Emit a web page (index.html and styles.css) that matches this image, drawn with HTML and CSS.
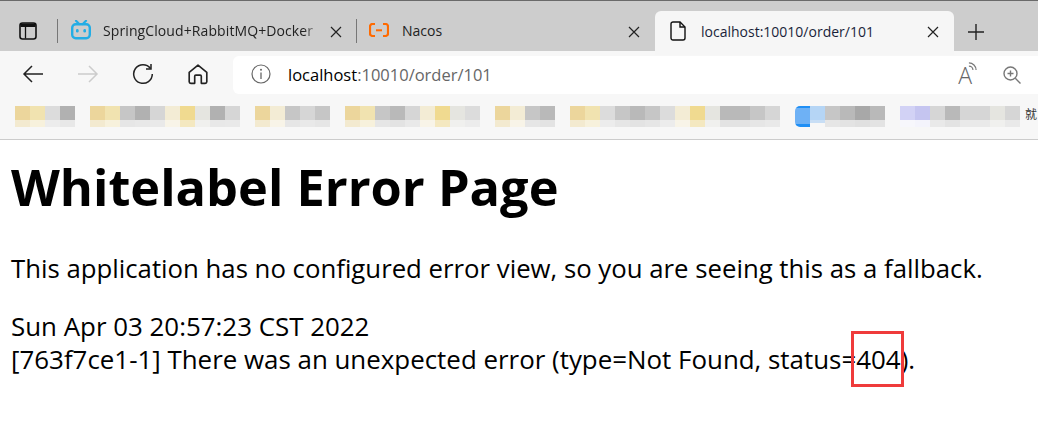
FILE: index.html
```html
<!DOCTYPE html>
<html lang="en">
<head>
<meta charset="utf-8">
<title>localhost:10010/order/101</title>
<link rel="stylesheet" href="styles.css">
</head>
<body>
<div class="browser">
  <div class="tabstrip">
    <svg class="ic tabs-ic" viewBox="0 0 18 18"><rect x="1" y="1" width="16" height="16" rx="2.500" fill="none" stroke="#111" stroke-width="1.600"/><path d="M1.500 1.500h15v3.500h-15z" fill="#111"/><path d="M6.500 5v11.500" stroke="#111" stroke-width="1.300"/></svg>
    <span class="sep"></span>
    <div class="tab tab-a">
      <svg class="fav" viewBox="0 0 20 20"><path d="M5 .8l3.200 3.200M15 .8l-3.200 3.200" stroke="#23ade5" stroke-width="2.200" stroke-linecap="round"/><rect x="1.200" y="4.200" width="17.600" height="14" rx="3.500" fill="none" stroke="#23ade5" stroke-width="2.400"/><rect x="5" y="9" width="2.600" height="3.600" rx="1.300" fill="#23ade5"/><rect x="12.400" y="9" width="2.600" height="3.600" rx="1.300" fill="#23ade5"/></svg>
      <span class="tab-title fade">SpringCloud+RabbitMQ+Docker</span>
      <svg class="close" viewBox="0 0 12 12"><path d="M1 1l10 10M11 1L1 11" stroke="#222" stroke-width="1.200"/></svg>
    </div>
    <span class="sep"></span>
    <div class="tab tab-b">
      <svg class="fav" viewBox="0 0 20 14"><path d="M6 1H3.500A2.500 2.500 0 0 0 1 3.500v7A2.500 2.500 0 0 0 3.500 13H6M14 1h2.500A2.500 2.500 0 0 1 19 3.500v7a2.500 2.500 0 0 1-2.500 2.500H14" fill="none" stroke="#ff6a00" stroke-width="2.200"/><path d="M7 7.300h6" stroke="#ff6a00" stroke-width="2"/></svg>
      <span class="tab-title">Nacos</span>
      <svg class="close" viewBox="0 0 12 12"><path d="M1 1l10 10M11 1L1 11" stroke="#222" stroke-width="1.200"/></svg>
    </div>
    <div class="tab tab-c">
      <svg class="fav doc" viewBox="0 0 16 20"><path d="M1 3a2 2 0 0 1 2-2h7l5 5v11a2 2 0 0 1-2 2H3a2 2 0 0 1-2-2z" fill="none" stroke="#111" stroke-width="1.400"/><path d="M10 1v5h5" fill="none" stroke="#111" stroke-width="1.400"/></svg>
      <span class="tab-title active">localhost:10010/order/101</span>
      <svg class="close" viewBox="0 0 12 12"><path d="M1 1l10 10M11 1L1 11" stroke="#222" stroke-width="1.200"/></svg>
    </div>
    <svg class="plus" viewBox="0 0 18 18"><path d="M9 1v16M1 9h16" stroke="#222" stroke-width="1.400"/></svg>
  </div>
  <div class="toolbar">
    <div class="nav">
      <svg class="nav-ic" viewBox="0 0 22 20"><path d="M21 10H2M10 2l-8 8 8 8" fill="none" stroke="#222" stroke-width="1.500"/></svg>
      <svg class="nav-ic" viewBox="0 0 22 20"><path d="M1 10h19M12 2l8 8-8 8" fill="none" stroke="#ccc" stroke-width="1.500"/></svg>
      <svg class="nav-ic" viewBox="0 0 22 22"><path d="M18.500 5.500A9.300 9.300 0 1 0 20.300 11" fill="none" stroke="#222" stroke-width="1.500"/><path d="M19 1v5h-5" fill="none" stroke="#222" stroke-width="1.500"/></svg>
      <svg class="nav-ic" viewBox="0 0 20 20"><path d="M2 8.500L10 2l8 6.500V17a1.500 1.500 0 0 1-1.500 1.500H13V12a1 1 0 0 0-1-1H8a1 1 0 0 0-1 1v6.500H3.500A1.500 1.500 0 0 1 2 17z" fill="none" stroke="#222" stroke-width="1.500" stroke-linejoin="round"/></svg>
    </div>
    <div class="omnibox">
      <svg class="info" viewBox="0 0 20 20"><circle cx="10" cy="10" r="9" fill="none" stroke="#666" stroke-width="1.200"/><path d="M10 8.500V15" stroke="#666" stroke-width="1.300"/><circle cx="10" cy="5.800" r="1" fill="#666"/></svg>
      <span class="url"><span class="host">localhost</span>:10010/order/101</span>
      <span class="omni-tools">
        <span class="read">A<svg class="waves" viewBox="0 0 10 10"><path d="M1 1a8 8 0 0 1 8 8M1 4.500a4.500 4.500 0 0 1 4.500 4.500" fill="none" stroke="#777" stroke-width="1.300"/></svg></span>
        <svg class="zoom-ic" viewBox="0 0 18 18"><circle cx="7.500" cy="7.500" r="6.500" fill="none" stroke="#777" stroke-width="1.400"/><path d="M12.300 12.300L17.500 17.500M7.500 4.500v6M4.500 7.500h6" stroke="#777" stroke-width="1.400"/></svg>
      </span>
    </div>
  </div>
  <div class="bookmarks">
    <div class="mosaic"><i class="y1"></i><i class="y2"></i><i class="g1"></i><i class="g5"></i></div>
    <div class="mosaic"><i class="y1"></i><i class="y2"></i><i class="g3"></i><i class="g5"></i><i class="g2"></i><i class="y3"></i><i class="y4"></i><i class="g0"></i><i class="g5"></i><i class="g2"></i></div>
    <div class="mosaic"><i class="y1"></i><i class="y3"></i><i class="g3"></i><i class="g2"></i><i class="g3"></i></div>
    <div class="mosaic"><i class="y1"></i><i class="y2"></i><i class="g3"></i><i class="g4"></i><i class="g2"></i><i class="y3"></i><i class="y4"></i><i class="g0"></i><i class="g1"></i></div>
    <div class="mosaic"><i class="y1"></i><i class="y3"></i><i class="g3"></i><i class="g4"></i></div>
    <div class="mosaic"><i class="y1"></i><i class="y2"></i><i class="g1"></i><i class="g3"></i><i class="g4"></i><i class="g3"></i><i class="g1"></i><i class="y3"></i><i class="y4"></i><i class="g0"></i><i class="g4"></i><i class="g4"></i><i class="g3"></i><i class="g2"></i></div>
    <div class="mosaic"><i class="b1"></i><i class="b2"></i><i class="g3"></i><i class="g4"></i><i class="g6"></i><i class="g4"></i></div>
    <div class="mosaic"><i class="p1"></i><i class="p2"></i><i class="g2"></i><i class="g4"></i><i class="g2"></i><i class="g2"></i><i class="g0"></i><i class="g2"></i></div>
    <span class="bm-cut">就</span>
  </div>
</div>
<main class="page">
  <h1>Whitelabel Error Page</h1>
  <p class="intro">This application has no configured error view, so you are seeing this as a fallback.</p>
  <div class="detail">Sun Apr 03 20:57:23 CST 2022</div>
  <div class="detail">[763f7ce1-1] There was an unexpected error (type=Not Found, status=<span class="mark">404</span>).</div>
</main>
</body>
</html>
```
FILE: styles.css
```css
* { box-sizing: border-box; }
html, body { margin: 0; padding: 0; }
body { width: 1038px; height: 444px; overflow: hidden; background: #fff; color: #000; font-family: "Open Sans", "Noto Sans", sans-serif; }
svg { display: block; flex: none; }

.browser { border-top: 1px solid #6a6a6a; }
.tabstrip { height: 50px; background: #cdcdcd; display: flex; align-items: flex-start; position: relative; }
.tabs-ic { width: 18px; height: 18px; margin: 21px 0 0 19px; }
.sep { width: 1px; height: 24px; margin-top: 18px; background: #777; flex: none; }
.tabstrip > .sep:first-of-type { margin-left: 20px; }
.tab { display: flex; align-items: center; height: 32px; margin-top: 13px; font-size: 14px; color: #222; flex: none; }
.tab-a { width: 298px; padding-left: 13px; }
.tab-b { width: 298px; padding-left: 12px; }
.tab-a .close, .tab-b .close { margin-top: 3px; }
.tab-a .close { margin-right: 14px; }
.tab-c { width: 299px; height: 44px; margin-top: 10px; padding: 0 0 4px 15px; background: #f6f6f6; border-radius: 6px 6px 0 0; position: relative; z-index: 2; }
.tab-c .close { margin-top: 2px; }
.fav { width: 20px; height: 20px; }
.tab-b .fav { height: 14px; }
.tab-title { margin-left: 13px; white-space: nowrap; flex: 1; }
.tab-a .tab-title { flex: none; width: 218px; margin-left: 12px; letter-spacing: .1px; margin-right: 9px; }
.fade { -webkit-mask-image: linear-gradient(to right, #000 92%, transparent); mask-image: linear-gradient(to right, #000 92%, transparent); }
.tab-c .doc { width: 16px; height: 20px; }
.active { color: #1a1f3a; margin-left: 15px; }
.close { width: 12px; height: 12px; margin-right: 15px; }
.plus { width: 18px; height: 18px; margin: 22px 0 0 13px; }

.toolbar { height: 43px; background: #f7f7f7; display: flex; align-items: flex-end; }
.nav { width: 233px; height: 38px; display: flex; align-items: center; gap: 33px; padding-left: 22px; padding-bottom: 2px; }
.nav-ic { width: 22px; height: 22px; }
.omnibox { flex: 1; height: 38px; background: #fff; border-radius: 6px 0 0 6px; display: flex; align-items: center; padding-left: 18px; }
.info { width: 20px; height: 20px; margin-bottom: 2px; }
.url { margin: 0 0 2px 17px; font-size: 16.5px; color: #666; }
.host { color: #000; }
.omni-tools { margin-left: auto; display: flex; align-items: center; gap: 26px; padding-right: 17px; margin-bottom: 1px; }
.read { font-size: 23px; font-weight: 300; color: #666; line-height: 24px; position: relative; padding-right: 5px; }
.waves { width: 9px; height: 9px; position: absolute; right: 0; top: -1px; }
.zoom-ic { width: 18px; height: 18px; }

.bookmarks { height: 46px; background: #f7f7f7; border-bottom: 1px solid #ccc; display: flex; align-items: flex-start; gap: 15px; padding: 12px 0 0 15px; position: relative; overflow: hidden; }
.mosaic { display: flex; flex: none; height: 21px; }
.mosaic i { width: 15px; height: 21px; display: block; }
.y1 { background: linear-gradient(#ecd69c 14px, #f3ead0 14px); }
.y2 { background: linear-gradient(#f1e3b0 14px, #f7f1dc 14px); }
.y3 { background: linear-gradient(#f3ecd5 14px, #f8f4e8 14px); }
.y4 { background: linear-gradient(#f0da90 14px, #f4e8c0 14px); }
.g0 { background: linear-gradient(#e5e5e0 14px, #f0f0ee 14px); }
.g1 { background: linear-gradient(#dcdcdc 14px, #ececec 14px); }
.g2 { background: linear-gradient(#d6d6d6 14px, #e9e9e9 14px); }
.g3 { background: linear-gradient(#c6c6c6 14px, #e6e6e6 14px); }
.g4 { background: linear-gradient(#b9b9b9 14px, #e3e3e3 14px); }
.g5 { background: linear-gradient(#b1b1b1 14px, #e8e8e8 14px); }
.g6 { background: linear-gradient(#a8a8a8 14px, #e0e0e0 14px); }
.b1 { background: linear-gradient(#1f8ff5 2px, #6eb1f5 2px, #6eb1f5 18px, #1f8ff5 18px); border-radius: 5px 0 0 5px; }
.b2 { background: linear-gradient(#b5d5f5 14px, #c8def5 14px, #c8def5 17px, #f7f7f7 17px); }
.p1 { background: linear-gradient(#d2d2f5 14px, #f7f7fc 14px); }
.p2 { background: linear-gradient(#c5c5f0 14px, #f4f4fc 14px); }
.bm-cut { position: absolute; left: 1025px; top: 11px; font-size: 12px; font-family: "Noto Sans CJK SC", sans-serif; color: #333; }

.page { padding: 0 0 0 11px; }
h1 { margin: 13px 0 0; font-size: 50.5px; line-height: 68px; font-weight: 700; }
.intro { margin: 31px 0 0; font-size: 25.75px; line-height: 33px; }
.intro + .detail { margin-top: 25px; }
.detail { font-size: 25.9px; line-height: 33px; white-space: nowrap; }
.mark { position: relative; }
.mark::after { content: ""; position: absolute; left: -5px; right: -3px; top: -10px; bottom: -10px; border: 3px solid #ef3b3b; }
```
